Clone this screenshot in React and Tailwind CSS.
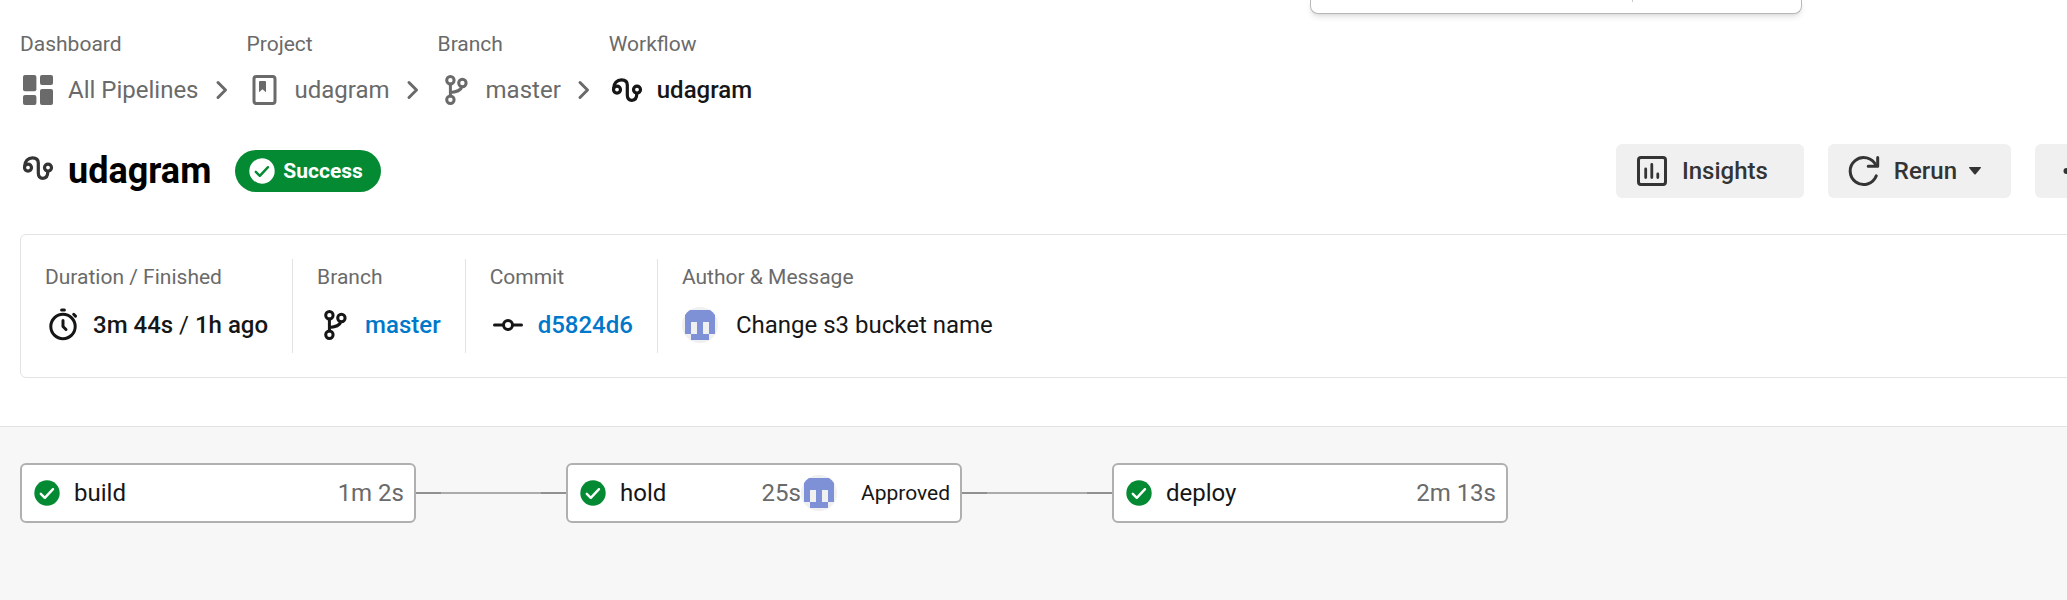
import React from "react";

function Icon({ children, className = "" }) {
  return (
    <svg viewBox="0 0 36 36" fill="none" aria-hidden="true" className={`size-9 shrink-0 ${className}`}>
      {children}
    </svg>
  );
}

function DashboardIcon() {
  return (
    <Icon>
      <g fill="currentColor">
        <rect x="3" y="3" width="13.4" height="16.2" rx="2" />
        <rect x="20" y="3" width="13" height="10" rx="2" />
        <rect x="3" y="23" width="13.4" height="10" rx="2" />
        <rect x="20" y="17" width="13" height="16" rx="2" />
      </g>
    </Icon>
  );
}

function ProjectIcon() {
  return (
    <Icon>
      <rect x="7" y="4.5" width="21" height="27" rx="2.5" stroke="currentColor" strokeWidth="3" />
      <path d="M13 9h5a1 1 0 0 1 1 1v10.3l-3.5-3-3.5 3V10a1 1 0 0 1 1-1z" fill="currentColor" />
    </Icon>
  );
}

function BranchIcon() {
  return (
    <Icon>
      <g stroke="currentColor" strokeWidth="3" strokeLinecap="round">
        <circle cx="12.4" cy="8.2" r="3.7" />
        <circle cx="12.4" cy="27.8" r="3.7" />
        <circle cx="24.4" cy="11" r="3.7" />
        <path d="M12.4 12v12M12.7 20.4c6.5-.6 10-1.6 11-5.4" />
      </g>
    </Icon>
  );
}

function WorkflowIcon({ className }) {
  return (
    <Icon className={className}>
      <g stroke="currentColor" strokeWidth="3.2">
        <circle cx="8" cy="17.6" r="3.5" />
        <circle cx="28" cy="17.6" r="3.5" />
        <path d="M4.6 16.5C4.6 11 8.2 7.8 12.5 7.8c3.8 0 5.8 2.2 5.8 5.2v10c0 3.2 1.7 5.300 4.700 5.300 3.300 0 4.800-2.500 4.800-6.700" />
      </g>
    </Icon>
  );
}

function ChevronIcon() {
  return (
    <Icon className="mx-1.5 text-[#6a6a6a]">
      <path d="M13 10.5l7.500 7.500-7.500 7.500" stroke="currentColor" strokeWidth="3" strokeLinecap="round" strokeLinejoin="round" />
    </Icon>
  );
}

function InsightsIcon() {
  return (
    <Icon>
      <rect x="4.5" y="4.5" width="27" height="27" rx="2.5" stroke="currentColor" strokeWidth="3" />
      <path d="M11.7 16v8.500M17.800 11.500v13M23.800 21v3.500" stroke="currentColor" strokeWidth="2.8" strokeLinecap="round" />
    </Icon>
  );
}

function RerunIcon() {
  return (
    <Icon>
      <g stroke="currentColor" strokeWidth="3" strokeLinecap="round" strokeLinejoin="round">
        <path d="M30.3 22.8A13.5 13.5 0 1 1 30 12.5" />
        <path d="M31.700 4.400v8.900h-9.500" />
      </g>
    </Icon>
  );
}

function TimerIcon() {
  return (
    <Icon>
      <g stroke="currentColor" strokeWidth="3" strokeLinecap="round" strokeLinejoin="round">
        <circle cx="18" cy="19.500" r="12.200" />
        <path d="M16.600 3h2.800M28.700 7.300l1.800 1.800M18 13.500v6l3 3" />
      </g>
    </Icon>
  );
}

function CommitIcon() {
  return (
    <Icon>
      <g stroke="currentColor" strokeWidth="3" strokeLinecap="round">
        <circle cx="18" cy="18" r="4.5" />
        <path d="M4.5 18h8M23.5 18h8" />
      </g>
    </Icon>
  );
}

function CheckCircle({ disc, tick }) {
  return (
    <svg viewBox="0 0 26 26" fill="none" aria-hidden="true" className="size-[26px] shrink-0">
      <circle cx="13" cy="13" r="12.7" className={disc} />
      <path d="M6.8 13.8l4 4 8.200-8.600" className={tick} strokeWidth="2.4" strokeLinecap="round" strokeLinejoin="round" />
    </svg>
  );
}

function Avatar() {
  return (
    <svg viewBox="0 0 36 36" role="img" aria-label="Author avatar" className="size-9 shrink-0 rounded-full bg-[#f0f0f0]">
      <path d="M3 3h30v24h-6v6H9v-6H3zM9 15v12h6V15zM21 15v12h6V15z" fill="#7e90d6" fillRule="evenodd" shapeRendering="crispEdges" />
    </svg>
  );
}

const crumbs = [
  { label: "Dashboard", text: "All Pipelines", icon: <DashboardIcon /> },
  { label: "Project", text: "udagram", icon: <ProjectIcon /> },
  { label: "Branch", text: "master", icon: <BranchIcon /> },
  { label: "Workflow", text: "udagram", icon: <WorkflowIcon />, current: true },
];

function Breadcrumbs() {
  return (
    <nav aria-label="Breadcrumb">
      <ol className="flex">
        {crumbs.map((c) => (
          <li key={c.label} className="flex flex-col gap-4">
            <span className="text-[21px] leading-6 text-[#6a6a6a]">{c.label}</span>
            <div className="flex items-center">
              <a
                href="#"
                aria-current={c.current ? "page" : undefined}
                className={`flex items-center gap-3 ${c.current ? "font-medium text-[#161616]" : "text-[#6a6a6a]"}`}
              >
                {c.icon}
                {c.text}
              </a>
              {!c.current && <ChevronIcon />}
            </div>
          </li>
        ))}
      </ol>
    </nav>
  );
}

function ActionButton({ className, children, ...rest }) {
  return (
    <button
      type="button"
      className={`flex h-[54px] items-center gap-3 rounded-md bg-[#f0f0f0] font-medium text-[#343434] ${className}`}
      {...rest}
    >
      {children}
    </button>
  );
}

function Fact({ label, children }) {
  return (
    <div className="border-r border-[#e3e3e3] px-6 pb-2.5 first:pl-0 last:border-r-0">
      <dt className="text-[21px] leading-9 text-[#6a6a6a]">{label}</dt>
      <dd className="mt-3 flex items-center gap-3 font-medium text-[#161616]">{children}</dd>
    </div>
  );
}

function Job({ name, time, children }) {
  return (
    <a
      href="#"
      className="flex h-[60px] w-[396px] shrink-0 items-center rounded-md border-2 border-[#b0b0b0] bg-white pr-2.5 pl-3 text-[#161616]"
    >
      <CheckCircle disc="fill-[#048a33]" tick="stroke-white" />
      <span className="ml-3.5 grow">{name}</span>
      <span className="text-[#6a6a6a]">{time}</span>
      {children}
    </a>
  );
}

function Connector() {
  return (
    <div className="flex w-[150px] shrink-0">
      <span className="h-0.5 w-[25px] bg-[#919191]" />
      <span className="h-0.5 grow bg-[#ababab]" />
      <span className="h-0.5 w-[25px] bg-[#919191]" />
    </div>
  );
}

export default function App() {
  return (
    <div className="relative flex min-h-screen flex-col overflow-hidden bg-white font-[Roboto,sans-serif] text-[24px] leading-9">
      <div className="absolute top-0 left-[1310px] flex h-3.5 w-[492px] justify-center rounded-b-lg border border-t-0 border-[#b8b8b8] bg-white pl-[152px] shadow-md">
        <span className="h-0.5 w-px bg-[#c8c8c8]" />
      </div>

      <header className="-mr-[52px] flex flex-col gap-9 pt-8 pl-5">
        <Breadcrumbs />

        <div className="flex items-center">
          <WorkflowIcon className="mb-1.5 text-[#343434]" />
          <h1 className="ml-3 text-[36px] leading-[54px] font-bold text-black">udagram</h1>
          <span className="ml-6 flex h-[42px] items-center gap-2 rounded-full bg-[#048a33] pr-[18px] pl-3.5 text-[21px] font-bold text-white">
            <CheckCircle disc="fill-white" tick="stroke-[#048a33]" />
            Success
          </span>
          <div className="ml-auto flex gap-6">
            <ActionButton className="pr-9 pl-[18px]">
              <InsightsIcon />
              Insights
            </ActionButton>
            <ActionButton className="pr-[30px] pl-[18px]" aria-haspopup="menu">
              <RerunIcon />
              Rerun
              <svg viewBox="0 0 12 8" aria-hidden="true" className="h-2 w-3">
                <path d="M.6 0h10.800c.6 0 .8.6.4 1L6.700 7.200c-.4.4-1 .4-1.400 0L.2 1C-.2.6 0 0 .6 0z" fill="currentColor" />
              </svg>
            </ActionButton>
            <ActionButton className="w-[84px] justify-center" aria-label="More actions">
              <Icon>
                <g fill="currentColor">
                  <circle cx="7.5" cy="18" r="3" />
                  <circle cx="18" cy="18" r="3" />
                  <circle cx="28.5" cy="18" r="3" />
                </g>
              </Icon>
            </ActionButton>
          </div>
        </div>

        <dl className="flex rounded-md border border-[#e3e3e3] p-6">
          <Fact label="Duration / Finished">
            <TimerIcon />
            <span>
              3m 44s <span className="font-normal">/</span> 1h ago
            </span>
          </Fact>
          <Fact label="Branch">
            <BranchIcon />
            <a href="#" className="text-[#0078ca]">master</a>
          </Fact>
          <Fact label="Commit">
            <CommitIcon />
            <a href="#" className="text-[#0078ca]">d5824d6</a>
          </Fact>
          <Fact label="Author &amp; Message">
            <Avatar />
            <span className="ml-1.5 font-normal">Change s3 bucket name</span>
          </Fact>
        </dl>
      </header>

      <main className="mt-12 flex grow items-start border-t border-[#e3e3e3] bg-[#f7f7f7] pt-9 pl-5">
        <div className="flex items-center">
          <Job name="build" time="1m 2s" />
          <Connector />
          <Job name="hold" time="25s">
            <Avatar />
            <span className="ml-6 text-[21px]">Approved</span>
          </Job>
          <Connector />
          <Job name="deploy" time="2m 13s" />
        </div>
      </main>
    </div>
  );
}
